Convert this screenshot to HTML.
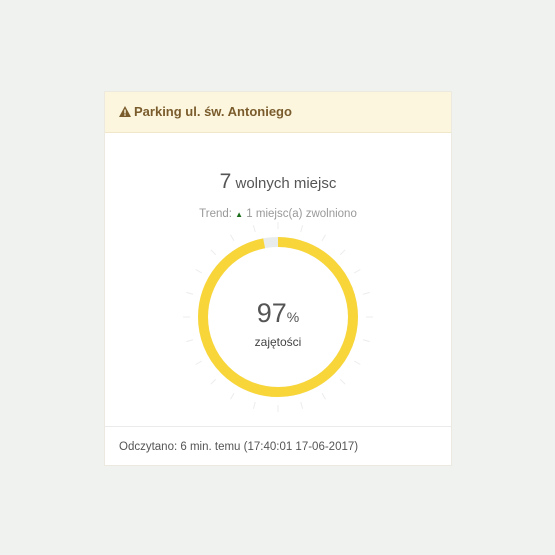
<!DOCTYPE html>
<html><head><meta charset="utf-8"><style>
body{margin:0;width:555px;height:555px;background:#f0f2f0;font-family:"Liberation Sans",sans-serif;position:relative;overflow:hidden}
.card{position:absolute;left:104px;top:91px;width:348px;height:375px;background:#fff;border:1px solid #ebe9e0;box-sizing:border-box}
.hd{position:absolute;left:0;top:0;right:0;height:40px;background:#fcf6df;border-bottom:1px solid #efe7c8;color:#7a5c2c;font-weight:bold;font-size:13px;line-height:40px;padding-left:14px}
.t{position:absolute;left:0;right:0;text-align:center}
.ft{position:absolute;left:0;right:0;top:334px;border-top:1px solid #ebebeb;height:40px;line-height:40px;font-size:11.5px;color:#555;padding-left:14px}
</style></head><body>
<div class="card">
<div class="hd"><svg width="12" height="11" viewBox="0 0 12 11" style="vertical-align:-1px;margin-right:3px"><path d="M6 0L12 11H0Z" fill="#7a5c2c"/><rect x="5.3" y="3.5" width="1.4" height="4" fill="#fcf6df"/><rect x="5.3" y="8.3" width="1.4" height="1.4" fill="#fcf6df"/></svg>Parking ul. św. Antoniego</div>
<div class="t" style="top:78px;color:#555;font-size:15px"><span style="font-size:21px">7</span> wolnych miejsc</div>
<div class="t" style="top:116px;color:#999;font-size:11.5px">Trend: <span style="color:#1a6b1a;font-size:8px">▲</span> 1 miejsc(a) zwolniono</div>
<div class="ft">Odczytano: 6 min. temu (17:40:01 17-06-2017)</div>
</div>
<svg width="555" height="555" style="position:absolute;left:0;top:0">
<g transform="translate(278,317)" stroke="#ececec" stroke-width="1">
<g id="tk"><line x1="0" y1="-88" x2="0" y2="-95"/></g>
<use href="#tk" transform="rotate(15)"/><use href="#tk" transform="rotate(30)"/><use href="#tk" transform="rotate(45)"/><use href="#tk" transform="rotate(60)"/><use href="#tk" transform="rotate(75)"/><use href="#tk" transform="rotate(90)"/><use href="#tk" transform="rotate(105)"/><use href="#tk" transform="rotate(120)"/><use href="#tk" transform="rotate(135)"/><use href="#tk" transform="rotate(150)"/><use href="#tk" transform="rotate(165)"/><use href="#tk" transform="rotate(180)"/><use href="#tk" transform="rotate(195)"/><use href="#tk" transform="rotate(210)"/><use href="#tk" transform="rotate(225)"/><use href="#tk" transform="rotate(240)"/><use href="#tk" transform="rotate(255)"/><use href="#tk" transform="rotate(270)"/><use href="#tk" transform="rotate(285)"/><use href="#tk" transform="rotate(300)"/><use href="#tk" transform="rotate(315)"/><use href="#tk" transform="rotate(330)"/><use href="#tk" transform="rotate(345)"/>
</g>
<g transform="translate(278,317) rotate(-90)">
<circle r="75" fill="none" stroke="#e8ecec" stroke-width="10"/>
<circle r="75" fill="none" stroke="#f8d63a" stroke-width="10" stroke-dasharray="457.1 1000"/>
</g>
<text x="278" y="322" text-anchor="middle" font-family="Liberation Sans" fill="#555" font-size="27">97<tspan font-size="14">%</tspan></text>
<text x="278" y="346" text-anchor="middle" font-family="Liberation Sans" fill="#444" font-size="12">zajętości</text>
</svg>
</body></html>
